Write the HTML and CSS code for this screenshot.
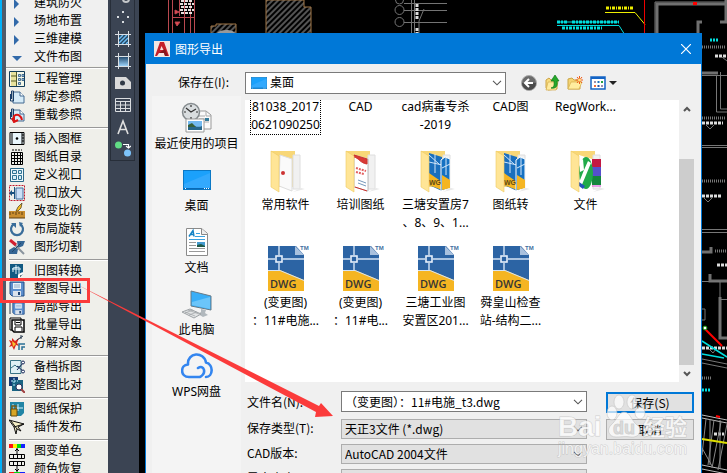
FILE: index.html
```
<!DOCTYPE html>
<html lang="zh-CN">
<head>
    <meta charset="utf-8">
    <title>图形导出</title>
    <link rel="stylesheet" href="styles.css">
</head>
<body>
    <!-- Shared icons -->
    <svg class="sprite" aria-hidden="true">
        <symbol id="dwg" viewBox="-3 0 48 48">
            <path d="M3 1h28l8 9v36H3z" fill="#2c64a4"/>
            <path d="M30 1l9 9h-9z" fill="#a9c1de"/>
            <path d="M3 25h12l24 10v11H3z" fill="#f5b522"/>
            <path d="M14 1v9M14 18v7M3 14h7M18 14h21" stroke="#d5e4f5" stroke-width="1.4" fill="none"/>
            <path d="M3 25.500h12l24 10" stroke="#d5e4f5" fill="none"/>
            <rect x="11" y="11" width="6" height="6" fill="#2c64a4" stroke="#e6effa" stroke-width="1.600"/>
            <text x="5" y="43" class="dwg-text">DWG</text>
            <text x="35" y="5" class="tm-text">TM</text>
        </symbol>
        <symbol id="folder-back" viewBox="0 0 48 48">
            <path d="M6 4h24v36H14z" fill="#f8d777"/>
            <path d="M28 8h7v34h-7z" fill="#f1f1f1" stroke="#dedede"/>
            <path d="M36 41l4 1-12 3z" fill="#e9e9e9"/>
        </symbol>
        <symbol id="folder-front" viewBox="0 0 48 48">
            <path d="M6 4l8 5v36l-8-5z" fill="#ffe596" stroke="#efc962" stroke-width=".6"/>
        </symbol>
        <symbol id="folder-dwg" viewBox="-3 0 48 48">
            <use href="#folder-back"/>
            <path d="M14 6l13 4v34l-13-6z" fill="#1a6fbd"/>
            <path d="M14 26l13 9v8l-13-5z" fill="#f5b522"/>
            <path d="M20 7v19M14 15l13 3M14 8l10 9" stroke="#cfe4f8"/>
            <path d="M26 13l4-3 5 2v29l-9 3z" fill="#1671c2" stroke="#fff"/>
            <path d="M27 28l8 5v8l-8 2z" fill="#f5b522"/>
            <path d="M27 21l8-4M31 11v17" stroke="#d5e9fa"/>
            <text x="14" y="38" class="mini-text">WG</text>
            <use href="#folder-front"/>
        </symbol>
        <symbol id="arrow-down" viewBox="0 0 10 6">
            <path d="M1 .8l4 4 4-4" fill="none" stroke="#555" stroke-width="1.100"/>
        </symbol>
        <symbol id="monitor" viewBox="0 0 28 20">
            <rect x=".5" y=".5" width="27" height="19" fill="#1ba1fb" stroke="#0b78c5"/>
            <path d="M1 14L27 3v15H1z" fill="#33a9fd"/>
            <path d="M1 18.500h26" stroke="#0869b5"/>
            <path d="M2 18.500h2M21 18.500h5" stroke="#fff" stroke-dasharray="1 1"/>
        </symbol>
        <symbol id="doc-clip" viewBox="0 0 16 16">
            <path d="M4 3h7l4 4v7H4z" fill="#d5ebf8" stroke="#456b91"/>
            <path d="M11 3v4h4" fill="#fff" stroke="#456b91"/>
            <path d="M1.500 5v7h3V2h-2v8" fill="none" stroke="#173d68"/>
        </symbol>
        <symbol id="floppy" viewBox="0 0 16 16">
            <path d="M1 1h14v14H3l-2-2z" fill="#5c8fce" stroke="#234d83"/>
            <path d="M4 2h8v6H4z" fill="#e9f3fb"/>
            <path d="M5 4h6M5 6h6" stroke="#8fabc8"/>
            <path d="M4 10h8v5H4z" fill="#dae2ec"/>
            <path d="M9 11h2v3H9z" fill="#1d4374"/>
        </symbol>
    </svg>

    <div class="app">
        <nav class="menu" aria-label="菜单">
            <ul class="menu-group menu-group-top">
                <li><a href="#"><svg viewBox="0 0 16 16"><path d="M5 4l5 5-5 5z" fill="#3169a9"/></svg>建筑防火</a></li>
                <li><a href="#"><svg viewBox="0 0 16 16"><path d="M5 4l5 5-5 5z" fill="#3169a9"/></svg>场地布置</a></li>
                <li><a href="#"><svg viewBox="0 0 16 16"><path d="M5 4l5 5-5 5z" fill="#3169a9"/></svg>三维建模</a></li>
                <li><a href="#"><svg viewBox="0 0 16 16"><path d="M3 7h10l-5 5z" fill="#3169a9"/></svg>文件布图</a></li>
            </ul>
            <ul class="menu-group">
                <li><a href="#"><svg viewBox="0 0 16 16"><path d="M.5.5h15v15H.5z" fill="#f4f7e8" stroke="#123c5a"/><path d="M2 1h5v14H2z" fill="#e8e29c"/><path d="M7.500 1v14M2 5h5M2 10h5" stroke="#555b2a"/><path d="M9.500 3.500h2v2h-2zM13 3.500h2v2h-2zM9.500 7.500h2v2h-2zM13 7.500h2v2h-2zM9.500 11.500h2v2h-2z" fill="#b8d6ee" stroke="#24527c" stroke-width=".8"/></svg>工程管理</a></li>
                <li><a href="#"><svg viewBox="0 0 16 16"><use href="#doc-clip"/></svg>绑定参照</a></li>
                <li><a href="#"><svg viewBox="0 0 16 16"><use href="#doc-clip"/><path d="M5 14V9c4-3 7 0 8 4M3 11l2 4 4-2" fill="none" stroke="#db1414" stroke-width="2"/></svg>重载参照</a></li>
            </ul>
            <ul class="menu-group">
                <li><a href="#"><svg viewBox="0 0 16 16"><path d="M1 1.500h14v12H1z" fill="#eaf7fd" stroke="#000"/><path d="M3 1v13M13 1v13" stroke="#000"/><path d="M13 4h2M13 7h2M13 10h2" stroke="#000"/><circle cx="8" cy="7.500" r="1.300"/></svg>插入图框</a></li>
                <li><a href="#"><svg viewBox="0 0 16 16"><path d="M3 1h10" stroke="#000" stroke-dasharray="2 1"/><path d="M2.500 3.500h11v12h-11zM2 6.500h12M2 9.500h12M2 12.500h12M5.500 3v13M8.500 3v13M11.500 3v13" fill="none" stroke="#000"/></svg>图纸目录</a></li>
                <li><a href="#"><svg viewBox="0 0 16 16"><path d="M1.500 1.500h13v13h-13z" fill="#eff8fb" stroke="#2c6989"/><path d="M3.500 3.500h4v3h-4zM9.500 3.500h3v3h-3zM3.500 8.500h4v4h-4zM9.500 8.500h3v4h-3z" fill="#d8eef8" stroke="#2f7293"/></svg>定义视口</a></li>
                <li><a href="#"><svg viewBox="0 0 16 16"><path d="M.5.5h15v15H.5z" fill="none" stroke="#c01a2e" stroke-dasharray="2 1"/><path d="M7 3h7v11H7z" fill="#cbdff6" stroke="#43719f"/><path d="M0 8l3-3v2h3v2H3v2z" fill="#1b527f"/><path d="M5.500 2v12" stroke="#1b527f"/></svg>视口放大</a></li>
                <li><a href="#"><svg viewBox="0 0 16 16"><path d="M0 8h16v7H0z" fill="#c88c2e"/><path d="M1 9v3M4 9v2M7 9v3M10 9v2M13 9v3M0 15h16" stroke="#604013"/><path d="M7 8l2-4 4-4-1 5-3 3z" fill="#f4bd24" stroke="#443319" stroke-width=".7"/></svg>改变比例</a></li>
                <li><a href="#"><svg viewBox="0 0 16 16"><path d="M5 3a6 6 0 1 0 6 0" fill="none" stroke="#396d9a" stroke-width="2.200"/><path d="M2 2h5v5zM10 1l4 1-3 4z" fill="#396d9a"/></svg>布局旋转</a></li>
                <li><a href="#"><svg viewBox="0 0 16 16"><path d="M8 2h8l-2 5-5 2zM0 11l5-3 4 2-1 5H0z" fill="#356694"/><path d="M4 4l11 11" stroke="#8a949d" stroke-width="2"/><path d="M1 1l6 5" stroke="#d21f2f" stroke-width="3"/><path d="M3 13l9-9" stroke="#23496c"/></svg>图形切割</a></li>
            </ul>
            <ul class="menu-group">
                <li><a href="#"><svg viewBox="0 0 16 16"><path d="M1 1h13v10l-4 4H1z" fill="#125a82"/><path d="M7 2v9M3 6h9M4 9V5l6-1v7" stroke="#e2f5fc" fill="none"/><path d="M10 15v-3l4-2" stroke="#fff" stroke-width="2"/></svg>旧图转换</a></li>
                <li><a href="#"><svg viewBox="0 0 16 16"><use href="#floppy"/></svg>整图导出</a></li>
                <li><a href="#"><svg viewBox="0 0 16 16"><path d="M1 15V2h10" fill="none" stroke="#2b3d53"/><use href="#floppy" x="3" y="3" width="13" height="13"/></svg>局部导出</a></li>
                <li><a href="#"><svg viewBox="0 0 16 16"><path d="M1 1h11v12H1z" fill="#fff" stroke="#000"/><path d="M3 3h12v12H5l-2-2z" fill="#fff" stroke="#000" stroke-width="1.500"/><path d="M6 4v4h6V4M7 5.500h4M6 14v-4h7v4" fill="none" stroke="#000"/></svg>批量导出</a></li>
                <li><a href="#"><svg viewBox="0 0 16 16"><path d="M0 5l3 1V3l3 3 4-3-2 5 2 3-3-1-2 5-2-4-3 1 2-3z" fill="#d9261c"/><path d="M3 6l4 3-3 3z" fill="#f7c331"/><path d="M8 5l6-4M12 0v4" stroke="#26394e"/><path d="M10 15V9h6M13 15v-3h3" stroke="#2b7297" stroke-width="1.500" fill="none"/></svg>分解对象</a></li>
            </ul>
            <ul class="menu-group">
                <li><a href="#"><svg viewBox="0 0 16 16"><path d="M1.500 1.500H12v13H1.500z" fill="#e0f0f4" stroke="#397284"/><path d="M2 9l4-3 2 2 4-1" stroke="#397284" fill="none"/><path d="M8 7l6 5M8 11l6-7" stroke="#172858"/><circle cx="14" cy="3.500" r="1.500" fill="#fff" stroke="#172858"/><circle cx="14" cy="12.500" r="1.500" fill="#fff" stroke="#172858"/></svg>备档拆图</a></li>
                <li><a href="#"><svg viewBox="0 0 16 16"><path d="M0 0h9v9H0z" fill="#153a73"/><path d="M3 3h11v11H3z" fill="#196482"/><path d="M2 4h7M5 1v9" stroke="#bdebff" stroke-dasharray="2 1"/><circle cx="10" cy="10" r="3" fill="#fff" stroke="#2d335f"/><path d="M12 12l4 4" stroke="#a04141" stroke-width="2"/></svg>整图比对</a></li>
            </ul>
            <ul class="menu-group">
                <li><a href="#"><svg viewBox="0 0 16 16"><path d="M1 1h14v11l-3 3H1z" fill="#2185a5"/><path d="M4 3v5M9 3v7M6 7h8" stroke="#d9f3fc"/><path d="M3 8V5h4v3" fill="none" stroke="#755c1b" stroke-width="1.500"/><path d="M2 8h6v7H2z" fill="#d7a625" stroke="#694c0d"/></svg>图纸保护</a></li>
                <li><a href="#"><svg viewBox="0 0 16 16"><path d="M0 1l15 4-6 3 3 4-4-2-1 5-2-7z" fill="#f5efc5" stroke="#111"/><path d="M15 5L5 8M2 2l6 8" stroke="#111"/></svg>插件发布</a></li>
            </ul>
            <ul class="menu-group">
                <li><a href="#"><svg viewBox="0 0 16 16"><path d="M0 1h4v4H0z" fill="#f11"/><path d="M4 1h4v4H4z" fill="#fe0"/><path d="M8 1h4v4H8z" fill="#0d1"/><path d="M12 1h4v4h-4z" fill="#12f"/><path d="M8 5v6M6 8l2-2 2 2M.5 11.500h15v4H.5zM4.500 11v5M8.500 11v5M12.500 11v5" stroke="#000" fill="none"/></svg>图变单色</a></li>
                <li><a href="#"><svg viewBox="0 0 16 16"><path d="M.5.500h15v4H.5zM4.500 0v5M8.500 0v5M12.500 0v5M8 5v6M6 8l2 2 2-2" stroke="#000" fill="none"/><path d="M0 11h5v4H0z" fill="#f11"/><path d="M5 11h6v4H5z" fill="#0d1"/><path d="M11 11h5v4h-5z" fill="#12f"/></svg>颜色恢复</a></li>
            </ul>
        </nav>

        <div class="tools-dock">
            <div class="tools">
                <button aria-label="云线"><svg viewBox="0 0 16 16"><path d="M2 9h6M5 12h6" stroke="#d8dce0"/><circle cx="11" cy="12" r="3" fill="none" stroke="#c4c7ca" stroke-width="2"/></svg></button>
                <button aria-label="点"><svg viewBox="0 0 16 16"><path d="M7 2h2v2H7zM2 7h2v2H2zM12 7h2v2h-2zM7 12h2v2H7z" fill="#d8dce0"/></svg></button>
                <button aria-label="图案填充"><svg viewBox="0 0 16 16"><path d="M4 4h9v9H4z" fill="#24455f"/><path d="M4 8l4-4M4 12l8-8M7 13l6-6M11 13l2-2" stroke="#6dbcf3" stroke-width="1.500"/><path d="M3.500 0v16M13.500 0v16M0 3.500h16M0 13.500h16" stroke="#dbe0e5"/></svg></button>
                <button aria-label="渐变色"><svg viewBox="0 0 16 16"><path d="M4 4h9v9H4z" fill="url(#grad)"/><path d="M3.500 0v16M13.500 0v16M0 3.500h16M0 13.500h16" stroke="#dbe0e5"/><defs><linearGradient id="grad" x2="0" y2="1"><stop stop-color="#244c70"/><stop offset="1" stop-color="#9dd3fa"/></linearGradient></defs></svg></button>
                <button aria-label="面域"><svg viewBox="0 0 16 16"><path d="M0 2h11l5 5v7H0z" fill="#dadada"/><circle cx="7.500" cy="8" r="2.500" fill="#303946"/></svg></button>
                <button aria-label="表格"><svg viewBox="0 0 16 16"><path d="M.5 1.500h15v13H.5zM0 4.500h16M0 8h16M0 11.500h16M5.500 4v10M10.500 4v10" fill="none" stroke="#dadde0"/></svg></button>
                <button aria-label="文字"><svg viewBox="0 0 16 16"><path d="M3 15L8 2l5 13M5 10.500h6" fill="none" stroke="#dfdfdf" stroke-width="1.600"/></svg></button>
                <button aria-label="添加选定对象"><svg viewBox="0 0 16 16"><circle cx="3.500" cy="4" r="3.500" fill="#61dc85"/><circle cx="12.500" cy="12" r="3.500" fill="#7dc4fb"/><path d="M8 3.500h5.500V6M11 5l2.500 2L16 5" fill="none" stroke="#fff" stroke-width="1.200"/></svg></button>
            </div>
        </div>

        <main class="workspace">
            <svg class="drawing" viewBox="139 0 588 473" aria-hidden="true">
                <g fill="none" stroke="#b9484f">
                    <path d="M168.500 0v33M172.500 0v33M184.500 0v33M190.500 0v33M194.500 0v33M172 17.500h22M179.500 0v16" />
                    <path d="M175 10l4 2-4 2zM175 22l2 4 3-4z" fill="#e94b54"/>
                </g>
                <path d="M181 1h12M180 4h14M181 7h12M180 10h14M181 13h12" stroke="#e6dedc" stroke-width="2" stroke-dasharray="3 1"/>
                <defs>
                    <pattern id="hatch" width="4" height="4" patternUnits="userSpaceOnUse" patternTransform="rotate(45)">
                        <path d="M1 0v4" stroke="#8c8c8c" stroke-width="1.200"/>
                    </pattern>
                </defs>
                <path d="M211 33v-7h5v-2h20v9M266 33v-2V0h38v7h7v26" fill="url(#hatch)" stroke="#a17747"/>
                <path d="M217 33c3-4 16-4 18 0z" fill="#999"/>
                <g fill="none" stroke="#747474">
                    <circle cx="399.500" cy="0" r="4"/><circle cx="399.500" cy="10" r="4.500"/><circle cx="399.500" cy="22" r="4.500"/>
                    <path d="M404 3.500h43M404 10.500h43M404 22.500h43M411.500 0v33M414.500 0v33M419 33V21l5-12"/>
                </g>
                <path d="M417 4v15M417 28v5" stroke="#ddd" stroke-width="3" stroke-dasharray="3 1"/>
                <path d="M605 12.500h30l10 12" fill="none" stroke="#ee0"/>
                <path d="M606 8h27" stroke="#ee0" stroke-width="3" stroke-dasharray="3 1 1 1"/>
                <path d="M644.500 0v33" stroke="#e00" />
                <path d="M557 25.500h62l5 8M557 22h62" fill="none" stroke="#0dd"/>
                <path d="M557 22h11M572 22h47M562 28h40" stroke="#0dd" stroke-width="3" stroke-dasharray="3 1 2 1"/>
                <g fill="none" stroke="#707070" stroke-width="3">
                    <path d="M657 33V4h70M698 33V22h4M720 22h7M702 73h16M702 252h9v-5M710 274v7h17"/>
                    <path d="M726 0v22M720 297v41h7"/>
                </g>
                <path d="M655 33V2h72M702 75.500h25M716.500 75v37H727M720.500 72v37h7M702 147.500h25M702 145.500h25M702 229.500h25M702 232.500h25M702 281.500h18v18h7M702 309h3v11h-3M702 359l25 5M702 363l25 5" fill="none" stroke="#777"/>
                <path d="M693 3.500h4" stroke="red" stroke-width="3"/>
                <path d="M710 40h8M702 390h8" stroke="#0dd" stroke-width="3" stroke-dasharray="2 1"/>
                <g stroke="#777" stroke-width="3" stroke-dasharray="1 1">
                    <path d="M702 47h23M702 118h23M702 181h24M715 251h12M702 378h10"/>
                </g>
                <path d="M715 56h12M702 123h21M702 196h20M717 265h10M702 348h25M714 434h10" stroke="#ddd" stroke-width="3" stroke-dasharray="3 1"/>
                <path d="M706 125l4 4 4-4M704 198l4 4 4-4M722 57l5 4M709 349l4 4 3-4" fill="none" stroke="#777"/>
                <path d="M702 341l25 16M702 354l22 4" stroke="#0dd" stroke-width="1.500"/>
                <path d="M705 329l17 17" stroke="red" stroke-width="2"/>
                <circle cx="705" cy="328" r="2" fill="#fff" stroke="#080"/>
                <path d="M702 415l25 5M702 418l25 5M702 465l25 5M702 469l25 5" stroke="#bbb"/>
                <path d="M706 419l-4 36M714 420l-6 45M721 422l-9 46M727 424l-9 46M702 448l10 18M710 419v46M720 420v49" stroke="#888"/>
                <path d="M702 439l25 4" stroke="#dd0" stroke-width="2"/>
                <path d="M716 416l4 1" stroke="red" stroke-width="2"/>
            </svg>

            <section class="dialog" role="dialog" aria-labelledby="dialog-title">
                <header class="title-bar">
                    <svg class="app-icon" viewBox="0 0 16 16" aria-hidden="true"><path d="M0 0h16v16H0z" fill="#f4e6e2"/><path d="M6 1h4l5 14h-4l-1-3H5l-2 3H1z" fill="#c4202a"/><path d="M7.500 5L6 9h3.500z" fill="#f8dfdd"/><path d="M2 14l9-6 3 7h-3l-1-3H5z" fill="#88161c"/></svg>
                    <h1 id="dialog-title">图形导出</h1>
                    <button class="close" aria-label="关闭"><svg viewBox="0 0 10 10"><path d="M0 0l10 10M10 0L0 10" stroke="#fff" stroke-width="1.200"/></svg></button>
                </header>

                <div class="location">
                    <label for="folder">保存在(I):</label>
                    <div class="combo combo-folder">
                        <select id="folder"><option>桌面</option></select>
                        <svg class="combo-icon" viewBox="0 0 28 20" preserveAspectRatio="none"><use href="#monitor"/></svg>
                        <svg class="chevron"><use href="#arrow-down"/></svg>
                    </div>
                    <div class="location-tools">
                        <button aria-label="后退"><svg viewBox="0 0 16 16"><circle cx="8" cy="8" r="7.500" fill="#6c6c6c" stroke="#aaa"/><path d="M1 8a7 7 0 0 0 14 0" fill="#4b4b4b"/><path d="M12 8H5M8 4L4 8l4 4" fill="none" stroke="#fff" stroke-width="2"/></svg></button>
                        <button aria-label="向上一级"><svg viewBox="0 0 16 16"><path d="M2 5l3-2 2 2h6v9l-9 1-2-2z" fill="#f8dc7e" stroke="#cda344"/><path d="M4 7h10l-2 8H2z" fill="#ffeb9e" stroke="#d3aa4a" stroke-width=".7"/><path d="M7 13c4-1 3-4 3-7H7l4-6 4 6h-2c1 5-1 8-6 7z" fill="#25a82b" stroke="#127a19" stroke-width=".7"/></svg></button>
                        <button aria-label="新建文件夹"><svg viewBox="0 0 16 16"><path d="M1 4l4-1 2 2h6v9H1z" fill="#f5d474" stroke="#cba646"/><path d="M4 7h11l-3 7H1z" fill="#ffed9f" stroke="#d6b04d" stroke-width=".7"/><path d="M12.500 1v8M8.500 5h8M10 2l5 6M15 2l-5 6" stroke="#f05a18"/><circle cx="12.500" cy="5" r="1.500" fill="#ffe080"/></svg></button>
                        <button class="view-button" aria-label="查看"><svg viewBox="0 0 16 16"><path d="M1 2h14v12H1z" fill="#fff" stroke="#1464c5" stroke-width="1.500"/><path d="M1 3h14" stroke="#1464c5" stroke-width="2"/><path d="M4 6h2v2H4zM11 10h2v2h-2z" fill="#9b8fae"/><path d="M7.500 6h2v2h-2z" fill="#1b72be"/><path d="M11 6h2v2h-2z" fill="#27a241"/><path d="M4 10h2v2H4z" fill="#f06a3b"/><path d="M7.500 10h2v2h-2z" fill="#2753a4"/></svg><svg class="caret" viewBox="0 0 8 4"><path d="M0 0h8L4 4z" fill="#222"/></svg></button>
                    </div>
                </div>

                <div class="content">
                    <nav class="places" aria-label="位置">
                        <a href="#"><svg viewBox="0 0 32 32"><path d="M16 9h9l5 4v14H16z" fill="#fafafa" stroke="#999"/><path d="M25 9v5h5M18 14h6M18 17h10M18 20h10" stroke="#aaa" fill="none"/><path d="M24 16h4v3h-4z" fill="#347b9a"/><circle cx="10" cy="10" r="8.500" fill="#d9dddf" stroke="#858b8e" stroke-width="1.500"/><path d="M10 3v2M10 15v2M3 10h2M15 10h2M5 6l5 4 5-3" fill="none" stroke="#333" stroke-width="1.200"/><path d="M5 17h18v13H5z" fill="#fff" stroke="#999"/><path d="M7 19h14v9H7z" fill="#74baf0"/><path d="M7 24c5-3 8 3 14 0v4H7z" fill="#286789"/><path d="M7 23l4-2 4 4H7z" fill="#375f38"/></svg>最近使用的项目</a>
                        <a href="#"><svg viewBox="0 0 32 32"><use href="#monitor" x="2" y="6" width="28" height="20"/></svg>桌面</a>
                        <a href="#"><svg viewBox="0 0 32 32"><path d="M5.500 2.500h15l6 5v22h-21z" fill="#fff" stroke="#8a8a8a"/><path d="M20.500 2.500v6h6" fill="#eee" stroke="#888"/><path d="M8 10.500l4-6 1 6M10 8.500h3" stroke="#1683c5" stroke-width="1.500" fill="none"/><path d="M15 7.500h4M14 10.500h10M8 13.500h16" stroke="#3aa1df"/><path d="M8 16.500h7M8 19.500h7M8 22.500h16M8 25.500h16" stroke="#999"/><path d="M16 16h8v5h-8z" fill="#459bd0"/><path d="M16 19l4-1 4 2v1h-8z" fill="#1f5947"/></svg>文档</a>
                        <a href="#"><svg viewBox="0 0 32 32"><path d="M10 3l20 5v14l-20-4z" fill="#39aef7" stroke="#667a87"/><path d="M11 14l18-5v12l-18-4z" fill="#6bc5fa"/><path d="M20 21l5 1-1 3 3 2-5 2-5-3 3-2z" fill="#b1b8bd"/><path d="M1 24l8-3 11 5-7 4z" fill="#e2e4e5" stroke="#9da2a5"/><path d="M4 24l10 4M7 22l11 4M4 25l8-3M8 27l8-3" stroke="#9da2a5" stroke-width=".7"/></svg>此电脑</a>
                        <a href="#"><svg viewBox="0 0 32 32"><path d="M19 27H8C-1 27-1 15 7 14.500 6 2 23 1 25 12.500c8 2 7 14.500 0 14.500M17 18c6-4 9 5 2 9" fill="none" stroke="#3385ef" stroke-width="2.600" stroke-linecap="round" stroke-linejoin="round"/></svg>WPS网盘</a>
                    </nav>

                    <div class="panel">
                        <div class="file-view">
                            <div class="files">
                                <a href="#" class="selected"><span>81038_2017<br>0621090250</span></a>
                                <a href="#"><span>CAD</span></a>
                                <a href="#"><span>cad病毒专杀<br>-2019</span></a>
                                <a href="#"><span>CAD图</span></a>
                                <a href="#"><span>RegWork...</span></a>

                                <a href="#"><svg viewBox="-3 0 48 48"><use href="#folder-back"/><path d="M15 8l12 4v32l-13-5z" fill="#fafafa" stroke="#ddd"/><circle cx="18" cy="26" r="2" fill="#c33"/><use href="#folder-front"/></svg><span>常用软件</span></a>
                                <a href="#"><svg viewBox="-3 0 48 48"><use href="#folder-back"/><path d="M14 8l14 4v32l-14-4z" fill="#fff" stroke="#bbb"/><path d="M14 8l13 4v5c-7-1-8-6-13-7zM15 40l12 4" fill="#d83a36" stroke="#ce322d"/><path d="M16 21l10 3M16 25l8 2" stroke="#e36060" stroke-width="2" stroke-dasharray="2 1"/><path d="M18 33l8 3M18 36l8 3" stroke="#79b"/><use href="#folder-front"/></svg><span>培训图纸</span></a>
                                <a href="#"><svg><use href="#folder-dwg"/></svg><span>三塘安置房7<br>、8、9、1...</span></a>
                                <a href="#"><svg><use href="#folder-dwg"/></svg><span>图纸转</span></a>
                                <a href="#"><svg viewBox="-3 0 48 48"><use href="#folder-back"/><path d="M27 12h9v8h-9z" fill="#c31842"/><path d="M27 20h9v9h-9z" fill="#5550cd"/><path d="M27 29h9v9h-9z" fill="#15863d"/><path d="M27 39h9" stroke="#e34ee5"/><path d="M14 8l13 4v32l-13-4z" fill="#fff"/><ellipse cx="21" cy="26" rx="7" ry="16" fill="#20aa4a"/><path d="M15 14l3-2 1 11 4-9 3 2-10 24-3-2 6-15-4 2z" fill="#fff"/><path d="M14 35l6 4-2 3-4-3z" fill="#2354bc"/><use href="#folder-front"/></svg><span>文件</span></a>

                                <a href="#"><svg><use href="#dwg"/></svg><span>(变更图)<br>：11#电施...</span></a>
                                <a href="#"><svg><use href="#dwg"/></svg><span>(变更图)<br>：11#电...</span></a>
                                <a href="#"><svg><use href="#dwg"/></svg><span>三塘工业图<br>安置区201...</span></a>
                                <a href="#"><svg><use href="#dwg"/></svg><span>舜皇山检查<br>站-结构二...</span></a>
                            </div>
                            <div class="scrollbar">
                                <button aria-label="向上滚动"><svg viewBox="0 0 8 6"><path d="M1 5l3-3 3 3" fill="none" stroke="#555" stroke-width="2"/></svg></button>
                                <div class="track"><div class="thumb"></div></div>
                                <button aria-label="向下滚动"><svg viewBox="0 0 8 6"><path d="M1 1l3 3 3-3" fill="none" stroke="#555" stroke-width="2"/></svg></button>
                            </div>
                        </div>

                        <form class="save-form">
                            <div class="fields">
                                <label for="file-name">文件名(N):</label>
                                <div class="combo combo-name">
                                    <input id="file-name" type="text" value="（变更图）：11#电施_t3.dwg">
                                    <svg class="chevron"><use href="#arrow-down"/></svg>
                                </div>
                                <label for="file-type">保存类型(T):</label>
                                <div class="combo combo-gray">
                                    <select id="file-type"><option>天正3文件 (*.dwg)</option></select>
                                    <svg class="chevron"><use href="#arrow-down"/></svg>
                                </div>
                                <label for="version">CAD版本:</label>
                                <div class="combo combo-gray">
                                    <select id="version"><option>AutoCAD 2004文件</option></select>
                                    <svg class="chevron"><use href="#arrow-down"/></svg>
                                </div>
                                <label for="scope">导出内容:</label>
                                <div class="combo combo-gray">
                                    <select id="scope"><option>全部内容</option></select>
                                    <svg class="chevron"><use href="#arrow-down"/></svg>
                                </div>
                            </div>
                            <div class="actions">
                                <button type="button" class="primary">保存(S)</button>
                                <button type="button">取消</button>
                            </div>
                        </form>
                    </div>
                </div>
            </section>
        </main>
    </div>

    <!-- Callout from the menu entry to the file type field -->
    <svg class="annotation" viewBox="0 0 727 473" aria-hidden="true">
        <rect x="1.500" y="279.500" width="87" height="22" fill="none" stroke="#fb3b3b" stroke-width="3"/>
        <path d="M76 284L319 406l2-3 12 13-18 1 1-5z" fill="#fb3b3b"/>
    </svg>

    <svg class="watermark" viewBox="0 0 140 70" aria-hidden="true">
        <g fill="#fff" fill-opacity=".7" stroke="#bbb" stroke-opacity=".5">
            <ellipse cx="31" cy="22" rx="5" ry="7"/>
            <ellipse cx="38" cy="11" rx="5" ry="7"/>
            <ellipse cx="51" cy="11" rx="5" ry="7"/>
            <ellipse cx="59" cy="22" rx="5" ry="6"/>
            <path d="M43 21c-5 0-7 8-13 13-5 5-2 12 5 12 6 0 9-1 15 0 8 1 13-7 6-12-6-5-7-13-13-13z"/>
        </g>
        <text x="-23" y="45" class="mark-bai">Bai</text>
        <text x="32" y="43" class="mark-du">du</text>
        <text x="62" y="44" class="mark-cn">经验</text>
        <text x="-23" y="63" class="mark-url">jingyan.baidu.com</text>
    </svg>
</body>
</html>
```
FILE: styles.css
```
* {
    box-sizing: border-box;
}
body {
    margin: 0;
    position: relative;
    height: 100vh;
    overflow: hidden;
    background: #000;
    color: #000;
    font-family: "Noto Sans", "Noto Sans CJK SC", sans-serif;
    font-size: 12px;
}
a {
    color: inherit;
    text-decoration: none;
}
button, input, select {
    font: inherit;
    color: inherit;
    margin: 0;
    padding: 0;
}
button {
    border: 0;
    background: none;
}
svg {
    display: block;
    flex: none;
}
.sprite {
    position: absolute;
    width: 0;
    height: 0;
}
.app {
    display: flex;
    height: 100%;
}

/* Left menu */
.menu {
    flex: none;
    width: 108px;
    overflow: hidden;
    background: #efefea;
    border-left: 2px solid #00b0f8;
    box-shadow: inset 4px 0 #505a69;
    padding-left: 4px;
}
.menu-group {
    list-style: none;
    margin: 0 0 0 3px;
    padding: 2px 0 3px;
    border-top: 1px solid #999;
    box-shadow: inset 0 1px #fff;
}
.menu-group-top {
    margin: -6px 0 1px;
    padding: 0 0 0 3px;
    border-top: 0;
    background: #f0f0f0;
    box-shadow: none;
}
.menu-group-top + .menu-group {
    margin-left: 0;
    padding-left: 3px;
}
.menu a {
    display: flex;
    align-items: center;
    gap: 9px;
    height: 18px;
    line-height: 18px;
}
.menu svg {
    width: 16px;
    height: 16px;
}

/* Vertical drawing tools */
.tools-dock {
    flex: none;
    width: 31px;
    overflow: hidden;
    background: #3b4453;
    padding: 0 4px 0 2px;
}
.tools {
    display: flex;
    flex-direction: column;
    margin-top: -16px;
    border: 1px solid #272e39;
    border-top: 0;
}
.tools button {
    display: grid;
    place-items: center;
    height: 22px;
}
.tools svg {
    width: 16px;
    height: 16px;
}

/* Workspace */
.workspace {
    flex: 1;
    min-width: 0;
    position: relative;
    padding: 33px 25px 0 6px;
    overflow: hidden;
}
.drawing {
    position: absolute;
    left: 0;
    top: 0;
    width: 588px;
    height: 473px;
}

/* Dialog */
.dialog {
    position: relative;
    background: #f0f0f0;
    border: 1px solid #0078d7;
    border-top: 0;
    min-height: 100%;
}
.title-bar {
    display: flex;
    align-items: center;
    gap: 5px;
    height: 31px;
    padding: 0 10px 0 8px;
    background: #0078d7;
    color: #fff;
}
.title-bar h1 {
    flex: 1;
    margin: 0;
    font-size: 12px;
    font-weight: normal;
}
.app-icon {
    width: 16px;
    height: 16px;
}
.close svg {
    width: 10px;
    height: 10px;
}
.location {
    display: flex;
    align-items: center;
    height: 32px;
    padding: 6px 7px 0 32px;
}
.location label {
    width: 67px;
    line-height: 18px;
    padding-bottom: 3px;
}
.location label, .save-form {
    font-family: "Noto Sans CJK SC", sans-serif;
}

/* Drop-down boxes */
.combo {
    display: grid;
    align-items: center;
    min-width: 0;
}
.combo > * {
    grid-area: 1 / 1;
}
.combo select, .combo input {
    appearance: none;
    width: 100%;
    min-width: 0;
    height: 20px;
    padding: 0 20px 0 3px;
    border: 1px solid #7a7a7a;
    border-radius: 0;
    background: #fff;
    line-height: 18px;
}
.combo-gray select {
    background: #e1e1e1;
    border-color: #adadad;
}
.combo-folder {
    flex: 1;
}
.combo-folder select {
    height: 22px;
    padding-left: 24px;
}
.combo-icon {
    width: 16px;
    height: 12px;
    margin-left: 6px;
}
.chevron {
    width: 10px;
    height: 6px;
    margin-right: 4px;
    justify-self: end;
    pointer-events: none;
}
.combo-name {
    margin-bottom: 2px;
}
.combo-name input {
    height: 21px;
}
.location-tools {
    display: flex;
    flex: none;
    gap: 7px;
    width: 188px;
    padding-left: 15px;
}
.location-tools svg {
    width: 16px;
    height: 16px;
}
.view-button {
    display: flex;
    align-items: center;
    gap: 3px;
}
.view-button .caret {
    width: 8px;
    height: 4px;
}

/* Places and file list */
.content {
    display: flex;
    padding: 0 7px 0 6px;
}
.places {
    flex: none;
    width: 89px;
    min-height: 377px;
    padding-top: 6px;
    display: flex;
    flex-direction: column;
    gap: 11px;
    background: #f4f4f4;
}
.places a {
    display: flex;
    flex-direction: column;
    align-items: center;
    gap: 1px;
    line-height: 18px;
    white-space: nowrap;
}
.places svg {
    width: 32px;
    height: 32px;
}
.panel {
    flex: 1;
    min-width: 0;
    padding: 4px 0 0 4px;
}
.file-view {
    display: flex;
    height: 282px;
    background: #fff;
    overflow: hidden;
}
.files {
    flex: 1;
    display: grid;
    grid-template-columns: repeat(auto-fill, 75px);
    align-content: start;
    gap: 13px 0;
    margin-top: -2px;
    padding-left: 3px;
    padding-right: 50px;
}
.files a {
    display: flex;
    flex-direction: column;
    align-items: center;
    gap: 1px;
    line-height: 18px;
    text-align: center;
    white-space: nowrap;
}
.files svg {
    width: 48px;
    height: 48px;
}
.selected span {
    outline: 1px dotted #000;
}
.scrollbar {
    flex: none;
    display: flex;
    flex-direction: column;
    width: 15px;
    background: #f0f0f0;
}
.scrollbar button {
    display: grid;
    place-items: center;
    height: 17px;
}
.scrollbar svg {
    width: 8px;
    height: 6px;
}
.track {
    flex: 1;
    display: flex;
    align-items: flex-end;
}
.thumb {
    width: 100%;
    height: 83%;
    background: #cdcdcd;
}

/* Save form */
.save-form {
    display: flex;
    gap: 19px;
    padding-top: 9px;
}
.fields {
    flex: 1;
    display: grid;
    grid-template-columns: 96px 1fr;
    align-items: center;
    gap: 5px 0;
}
.fields label {
    padding: 0 0 2px 2px;
    line-height: 18px;
}
.fields label, .location label {
    white-space: nowrap;
}
.actions {
    flex: none;
    width: 88px;
    padding-top: 1px;
    display: flex;
    flex-direction: column;
    gap: 6px;
}
.actions button {
    height: 21px;
    background: #e1e1e1;
    border: 1px solid #adadad;
    line-height: 18px;
}
.actions .primary {
    border: 2px solid #0078d7;
    line-height: 16px;
}

/* Overlays */
.annotation {
    position: absolute;
    left: 0;
    top: 0;
    width: 727px;
    height: 473px;
    pointer-events: none;
}
.watermark {
    position: absolute;
    left: 581px;
    top: 391px;
    width: 140px;
    height: 70px;
    overflow: visible;
    pointer-events: none;
}
.watermark text {
    fill: #fff;
    fill-opacity: .75;
    stroke: #999;
    stroke-opacity: .4;
    stroke-width: 1px;
    paint-order: stroke;
}
.mark-bai {
    font: bold 28px "Liberation Sans", sans-serif;
}
.watermark .mark-du {
    font: bold 18px "Liberation Sans", sans-serif;
    fill: #d2d2d2;
}
.mark-cn {
    font: bold 22px "Noto Sans CJK SC", sans-serif;
}
.mark-url {
    font: 16px "Liberation Sans", sans-serif;
}
.dwg-text {
    font: 600 11px "Open Sans", sans-serif;
    fill: #343434;
}
.tm-text {
    font: bold 6px "Liberation Sans", sans-serif;
    fill: #426f9f;
}
.mini-text {
    font: bold 7px "Liberation Sans", sans-serif;
    fill: #604b19;
}
```
